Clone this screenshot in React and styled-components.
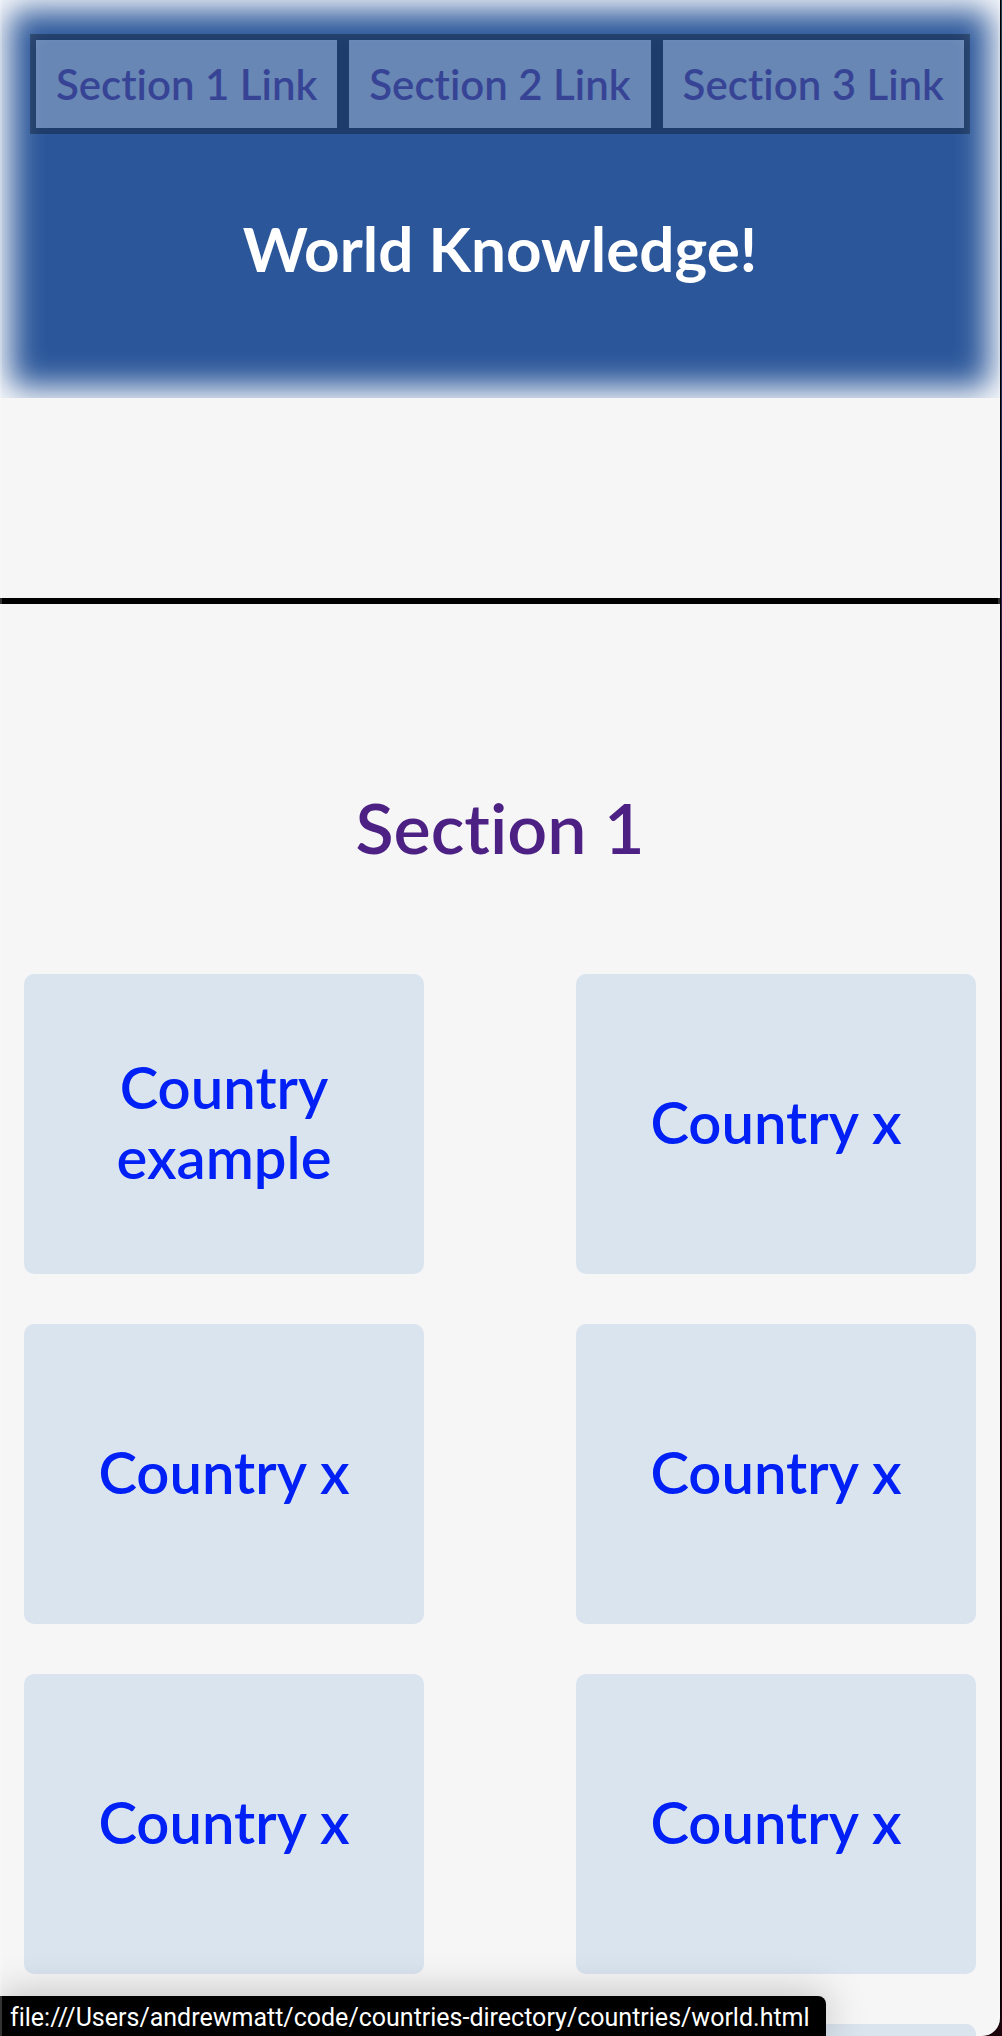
import React from "react";
import styled, { createGlobalStyle } from "styled-components";

const GlobalStyle = createGlobalStyle`
  *, *::before, *::after { box-sizing: border-box; }
  html, body { margin: 0; background: #1c040c; }
  body {
    font-family: Lato, "Open Sans", sans-serif;
    font-variant-ligatures: none;
  }
`;

const Window = styled.div`
  height: 100vh;
  padding-right: 1px;
  background: linear-gradient(#1c4050, #2a2450 25%, #3c0c20 50%, #1c040c);
  overflow: hidden;
`;

const Frame = styled.div`
  position: relative;
  height: 100%;
  padding-right: 1px;
  background: #1c040c;
  background: linear-gradient(#000 98%, #1c040c);
  border-bottom-right-radius: 18px;
  overflow: hidden;

  &::after {
    content: "";
    position: absolute;
    inset: 0 1px 0 0;
    border: solid rgba(255, 255, 255, 0.2);
    border-width: 0 2px;
    border-bottom-right-radius: 18px;
    pointer-events: none;
  }
`;

const Page = styled.div`
  height: 100%;
  background: #f6f6f6;
  border-bottom-right-radius: 18px;
  overflow: hidden;
`;

const Header = styled.header`
  height: 398px;
  padding: 34px 30px 0;
  background: #2b579a;
  box-shadow: inset 0 0 32px 10px #fff;
`;

const Nav = styled.nav`
  display: grid;
  grid-template-columns: repeat(3, 1fr);
`;

const NavLink = styled.a`
  display: flex;
  align-items: center;
  justify-content: center;
  height: 100px;
  border: 6px solid #000;
  background: #f5f5f5;
  color: #551a8b;
  font-size: 42px;
  font-weight: 600;
  text-decoration: none;
  white-space: nowrap;
  opacity: 0.3;
`;

const Title = styled.h1`
  margin: 74px 0 0;
  color: #fff;
  font-size: 62px;
  line-height: 80px;
  font-weight: 700;
  text-align: center;
`;

const Divider = styled.hr`
  height: 6px;
  margin: 200px 0 0;
  border: 0;
  background: #000;
`;

const SectionTitle = styled.h2`
  margin: 178px 0 102px;
  font-size: 70px;
  line-height: 90px;
  font-weight: 600;
  text-align: center;

  a {
    color: #4d2184;
    text-decoration: none;
  }
`;

const Cards = styled.div`
  display: grid;
  grid-template-columns: repeat(2, 400px);
  justify-content: space-between;
  row-gap: 50px;
  padding: 0 24px 50px;
`;

const Card = styled.a`
  display: flex;
  align-items: center;
  justify-content: center;
  height: 300px;
  padding: 0 72px 4px;
  border-radius: 10px;
  background: #dae4ee;
  color: #0020f5;
  font-size: 58px;
  line-height: 70px;
  font-weight: 600;
  text-align: center;
  text-decoration: none;
`;

const StatusBar = styled.div`
  position: absolute;
  left: 0;
  bottom: 0;
  height: 40px;
  padding: 0 16px 0 10px;
  border-top-right-radius: 8px;
  background: #000;
  box-shadow: 0 0 40px rgba(0, 0, 0, 0.25);
  color: #fff;
  font-family: Roboto, Inter, sans-serif;
  font-size: 25px;
  line-height: 44px;
  white-space: nowrap;
`;

const links = ["Section 1 Link", "Section 2 Link", "Section 3 Link"];
const countries = [
  "Country example",
  "Country x",
  "Country x",
  "Country x",
  "Country x",
  "Country x",
  "",
  "",
];

export default function App() {
  return (
    <Window>
      <GlobalStyle />
      <Frame>
        <Page>
          <Header>
            <Nav aria-label="Sections">
              {links.map((label, i) => (
                <NavLink key={label} href={`#section-${i + 1}`}>
                  {label}
                </NavLink>
              ))}
            </Nav>
            <Title>World Knowledge!</Title>
          </Header>
          <Divider />
          <main>
            <SectionTitle id="section-1">
              <a href="#section-1">Section 1</a>
            </SectionTitle>
            <Cards>
              {countries.map((name, i) => (
                <Card key={i} href="#country">
                  {name}
                </Card>
              ))}
            </Cards>
          </main>
        </Page>
        <StatusBar>
          file:///Users/andrewmatt/code/countries-directory/countries/world.html
        </StatusBar>
      </Frame>
    </Window>
  );
}
